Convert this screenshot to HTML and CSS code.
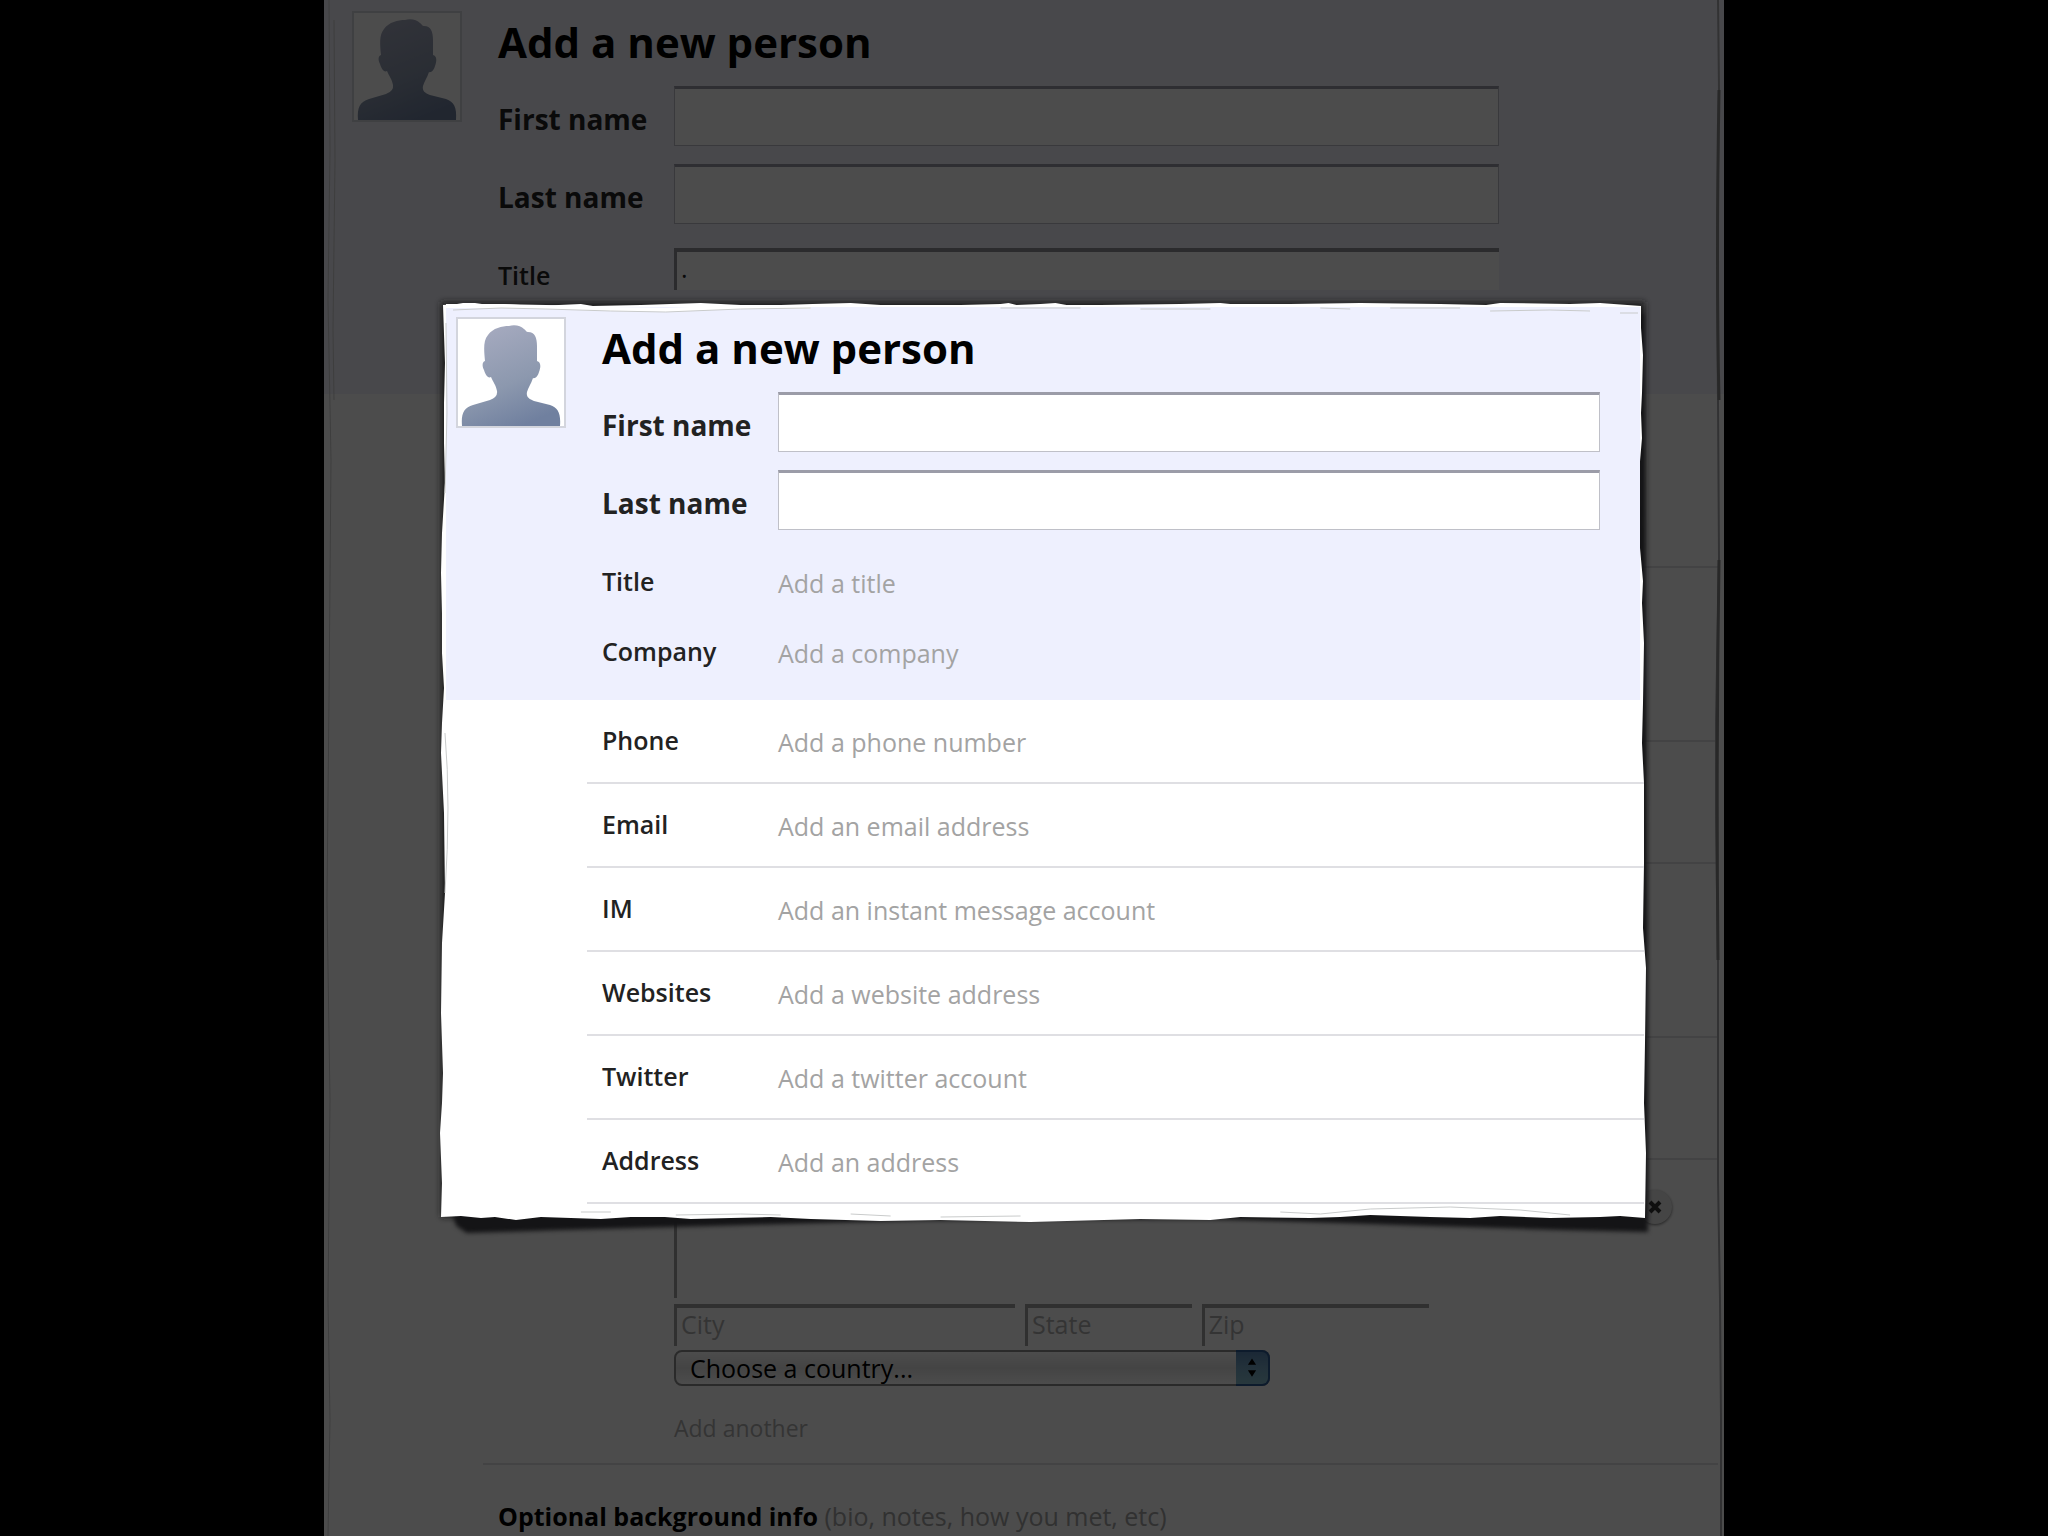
FILE: index.html
```html
<!DOCTYPE html>
<html lang="en">
<head>
    <meta charset="UTF-8">
    <meta name="viewport" content="width=device-width, initial-scale=1.0">
    <title>Add a new person</title>
    <link rel="stylesheet" href="styles.css">
</head>
<body>
    <!-- silhouette shared by both avatars -->
    <svg class="defs" width="0" height="0" aria-hidden="true">
        <defs>
            <linearGradient id="skin" x1="0.2" y1="0" x2="0.6" y2="1">
                <stop offset="0" stop-color="#a7abc0"/>
                <stop offset="0.6" stop-color="#8c98ae"/>
                <stop offset="1" stop-color="#70809f"/>
            </linearGradient>
            <symbol id="person" viewBox="0 0 108 109">
                <path fill="url(#skin)" d="M5 108 C4 95 7 90 16 87 L33 82 Q41 79 40 73 C39 67 36 64 34 59 C31 61 28 56 27 52 C25 48 25 44 28 43 C27 32 26 23 31 17 C36 10 45 8 52 8 C58 6 64 8 67 11 C69 12 69 14 71 14 C78 14 80 20 80 28 L80 43 C84 44 84 49 82 54 C81 58 78 61 76 60 C74 66 71 70 70 74 C69 79 72 81 77 83 L93 87 C101 90 104 95 103 108 Z"/>
            </symbol>
        </defs>
    </svg>

    <div class="page">
        <form class="form">
            <div class="form-header">
                <svg class="avatar" aria-hidden="true"><use href="#person"/></svg>
                <div class="fields">
                    <h1>Add a new person</h1>
                    <div class="name-row">
                        <label for="first-name">First name</label>
                        <input type="text" id="first-name">
                    </div>
                    <div class="name-row">
                        <label for="last-name">Last name</label>
                        <input type="text" id="last-name">
                    </div>
                    <div class="row">
                        <label for="title">Title</label>
                        <input type="text" id="title" class="inset" value=".">
                    </div>
                </div>
            </div>
            <div class="section tall"></div>
            <div class="section tall"></div>
            <div class="section short"></div>
            <div class="section tall"></div>
            <div class="section short"></div>
            <div class="section address">
                <div class="address-fields">
                    <textarea class="inset street" aria-label="Street address"></textarea>
                    <div class="city-row">
                        <input type="text" class="inset" placeholder="City" aria-label="City">
                        <input type="text" class="inset" placeholder="State" aria-label="State">
                        <input type="text" class="inset" placeholder="Zip" aria-label="Zip">
                    </div>
                    <div class="country">
                        <select aria-label="Country">
                            <option>Choose a country...</option>
                        </select>
                        <svg class="stepper" viewBox="0 0 34 35" aria-hidden="true">
                            <path d="M12.500 14 L17 7 L21.500 14 Z M12.500 20 L17 27 L21.500 20 Z"/>
                        </svg>
                    </div>
                    <a href="#" class="another">Add another</a>
                </div>
                <button type="button" class="remove" aria-label="Remove address">
                    <svg viewBox="0 0 34 34" aria-hidden="true"><path d="M12 12 L22 22 M22 12 L12 22"/></svg>
                </button>
            </div>
            <p class="background-info"><strong>Optional background info</strong> (bio, notes, how you met, etc)</p>
        </form>

        <svg class="edge edge-left" viewBox="0 0 20 1536" preserveAspectRatio="none" aria-hidden="true">
            <path d="M5 0 L6 150 L4 300 L7 460 L5 700 L3 900 L6 1100 L4 1300 L6 1420 L4 1536"/>
            <path d="M10 20 L11 160 L9 330 L10 400"/>
        </svg>
        <svg class="edge edge-right" viewBox="0 0 20 1536" preserveAspectRatio="none" aria-hidden="true">
            <path d="M14 0 L15 90 L13 250 L14 400 L15 560 L12 720 L12 820 L14 960 L14 1180 L16 1300 L17 1420 L17 1536"/>
            <path class="thick" d="M15 90 Q12 270 15 400"/>
            <path class="thick" d="M15 560 Q12 760 14 960"/>
        </svg>
        <div class="shade"></div>

        <form class="popup">
            <!-- torn paper sheet behind the form -->
            <svg class="paper" viewBox="0 0 1206 917" preserveAspectRatio="none" aria-hidden="true">
                <defs>
                    <filter id="soft" x="-5%" y="-5%" width="110%" height="110%">
                        <feGaussianBlur stdDeviation="3"/>
                    </filter>
                    <filter id="crisp" x="-5%" y="-5%" width="110%" height="110%" color-interpolation-filters="sRGB">
                        <feGaussianBlur stdDeviation="2"/>
                    </filter>
                </defs>
                <path class="glow" d="M0 -1 H1205 V914 H0 Z" filter="url(#soft)"/>
                <path class="shadow" d="M1180 10 L1203 12 L1204 300 L1206 600 L1207 928 L1120 926 L960 921 L760 914 L480 916 L270 922 L120 926 L26 929 L16 922 L12 910 L600 880 L1180 900 Z" filter="url(#crisp)"/>
                <path class="sheet" d="M2 2 L16 1 L22 0 L34 0 L48 2 L62 1 L96 3 L118 2 L140 1 L152 3 L200 2 L230 1 L260 0 L300 2 L340 2 L372 1 L410 0 L440 2 L520 2 L560 1 L568 0 L576 2 L600 1 L615 0 L626 2 L660 2 L740 1 L780 0 L790 1 L850 1 L920 0 L1000 1 L1046 2 L1060 0 L1130 1 L1160 0 L1201 3 L1201 25 L1203 52 L1202 90 L1201 110 L1202 135 L1199 170 L1199 210 L1200 245 L1203 278 L1202 300 L1204 340 L1203 400 L1202 440 L1204 480 L1204 560 L1203 625 L1206 665 L1205 740 L1204 800 L1206 850 L1205 915 L1180 913 L1160 914 L1110 915 L1060 913 L1030 915 L990 914 L930 912 L900 914 L870 915 L800 914 L770 917 L700 916 L590 919 L500 917 L440 918 L370 916 L330 914 L290 915 L250 916 L224 914 L190 914 L160 916 L130 915 L100 914 L75 917 L54 914 L40 915 L20 913 L0 914 L1 880 L-1 830 L1 800 L2 770 L0 710 L1 640 L4 590 L3 510 L0 450 L1 420 L3 385 L1 350 L1 310 L0 270 L1 230 L4 180 L3 140 L3 100 L4 60 Z"/>
                <path class="crease" d="M140 909 L170 909 M235 912 L300 911 L340 912 M410 911 L450 913 M500 914 L580 913 M840 909 L880 911 L930 906 L1010 904 L1080 907 L1130 912"/>
                <path class="crease" d="M4 430 Q10 500 4 590"/>
            </svg>
            <div class="form-header">
                <svg class="avatar" aria-hidden="true"><use href="#person"/></svg>
                <div class="fields">
                    <h1>Add a new person</h1>
                    <div class="name-row">
                        <label for="popup-first-name">First name</label>
                        <input type="text" id="popup-first-name">
                    </div>
                    <div class="name-row">
                        <label for="popup-last-name">Last name</label>
                        <input type="text" id="popup-last-name">
                    </div>
                    <div class="row"><span class="name">Title</span><a href="#">Add a title</a></div>
                    <div class="row"><span class="name">Company</span><a href="#">Add a company</a></div>
                </div>
            </div>
            <div class="row section"><span class="name">Phone</span><a href="#">Add a phone number</a></div>
            <div class="row section"><span class="name">Email</span><a href="#">Add an email address</a></div>
            <div class="row section"><span class="name">IM</span><a href="#">Add an instant message account</a></div>
            <div class="row section"><span class="name">Websites</span><a href="#">Add a website address</a></div>
            <div class="row section"><span class="name">Twitter</span><a href="#">Add a twitter account</a></div>
            <div class="row section"><span class="name">Address</span><a href="#">Add an address</a></div>
            <!-- creases that run over the header colour -->
            <svg class="creases" viewBox="0 0 1206 917" preserveAspectRatio="none" aria-hidden="true">
                <path class="fold" d="M5 3 L60 3 L105 4 L170 6 L225 7 L300 4 L370 4"/>
                <path class="crease" d="M12 7 L60 5 L105 6 L170 8 L225 9 L300 6 L370 5 M560 5 L640 5 M700 6 L770 6 M880 5 L910 6 M950 5 L1020 5 M1050 8 L1110 7 L1150 8 M1180 10 L1198 10"/>
                <path class="crease" d="M5 20 L6 110 L4 190"/>
            </svg>
        </form>
    </div>
</body>
</html>
```

FILE: styles.css
```css
* {
    box-sizing: border-box;
}
body {
    margin: 0;
    background: #000;
    color: #222;
    font-family: "Open Sans", "Noto Sans", sans-serif;
    font-size: 25px;
}
.defs {
    position: absolute;
}
.page {
    position: relative;
    max-width: 1400px;
    min-height: 100vh;
    margin: 0 auto;
    background: #fff;
    overflow: hidden;
}
h1 {
    margin: 0 0 14px;
    font-size: 42px;
    line-height: 60px;
    color: #000;
}
a {
    color: #a3a3a3;
    text-decoration: none;
}
input, textarea, select {
    font: inherit;
    color: #222;
    background: #fff;
    border-radius: 0;
    outline: none;
}

/* header block */
.form-header {
    display: flex;
    align-items: flex-start;
    gap: 37px;
    padding: 12px 225px 82px 29px;
    background: #f0f0fa;
}
.avatar {
    flex: none;
    width: 108px;
    height: 109px;
    background: #fff;
    outline: 2px solid #d3d5dd;
    outline-offset: -1px;
}
.fields {
    flex: 1;
}
.name-row, .row {
    display: grid;
    grid-template-columns: 176px 1fr;
    align-items: center;
}
.name-row {
    margin-bottom: 18px;
    font-size: 28px;
}
.name-row label {
    padding-top: 6px;
    font-weight: 700;
}
.name-row input {
    width: 100%;
    height: 60px;
    padding: 0 10px;
    border: 1px solid #bfc0c8;
    border-top: 3px solid #9b9ca8;
}
.row {
    min-height: 70px;
}
.row label, .name {
    padding-bottom: 4px;
    font-weight: 600;
}
.inset {
    width: 100%;
    height: 42px;
    padding: 0 4px 6px;
    border: 0 solid #a0a0a0;
    border-top-width: 4px;
    border-left-width: 3px;
}
.inset::placeholder {
    color: #b0b0b0;
    opacity: 1;
}
.row .inset {
    align-self: start;
    margin-top: 6px;
    border-color: #8f8f96;
}

/* sections under the header */
.section {
    margin: 0 6px 0 159px;
    padding-left: 15px;
    border-bottom: 2px solid #dfdfe3;
}
.tall {
    height: 174px;
}
.short {
    height: 122px;
}
.address {
    display: flex;
    justify-content: space-between;
    align-items: flex-start;
    padding: 20px 46px 19px 191px;
}
.address-fields {
    flex: 0 1 755px;
}
.street {
    display: block;
    height: 118px;
    resize: none;
}
.city-row {
    display: grid;
    grid-template-columns: 45fr 22fr 30fr;
    gap: 10px;
    margin: 6px 0 4px;
}
.country {
    position: relative;
    width: 79%;
}
.country select {
    display: block;
    width: 100%;
    height: 36px;
    padding: 0 40px 0 14px;
    appearance: none;
    line-height: 32px;
    color: #000;
    background: linear-gradient(#fff, #e4e4e4 50%, #fff);
    border: 2px solid #8c8c8c;
    border-radius: 8px;
}
.stepper {
    position: absolute;
    top: 0;
    right: 0;
    width: 34px;
    height: 36px;
    background: linear-gradient(#5a86b4, #76a6c4 50%, #86bccb);
    border: 2px solid #2d5a94;
    border-left: 0;
    border-radius: 0 8px 8px 0;
    pointer-events: none;
}
.another {
    display: block;
    margin-top: 26px;
    font-size: 23px;
    line-height: 32px;
    color: #b0b0b0;
}
.remove {
    width: 34px;
    height: 34px;
    margin-top: 10px;
    padding: 0;
    border: 0;
    border-radius: 50%;
    background: #e8e8e8;
    box-shadow: 0 1px 3px #777;
}
.remove svg {
    display: block;
}
.remove path {
    stroke: #333;
    stroke-width: 4;
}
.background-info {
    margin: 0 20px 0 174px;
    padding: 34px 0 2px;
    line-height: 34px;
    color: #a3a3a3;
}
.background-info strong {
    color: #000;
}

/* worn page edges and dimming */
.edge {
    position: absolute;
    top: 0;
    width: 20px;
    height: 100%;
}
.edge-left {
    left: 0;
}
.edge-right {
    right: 0;
}
.edge path {
    fill: none;
    stroke: #cfcfcf;
    stroke-width: 1;
}
.edge-right path {
    stroke: #a8a8ac;
    stroke-width: 2;
}
.edge-right .thick {
    stroke: #888;
    stroke-width: 3;
}
.shade {
    position: absolute;
    inset: 0;
    background: rgba(0, 0, 0, 0.7);
}

/* popup sheet */
.popup {
    position: absolute;
    top: 303px;
    left: 117px;
    right: 78px;
    padding-bottom: 16px;
    isolation: isolate;
}
.paper, .creases {
    position: absolute;
    top: 0;
    left: 0;
    width: 100%;
    height: 100%;
    overflow: visible;
    pointer-events: none;
}
.paper {
    z-index: -1;
}
.sheet {
    fill: #fff;
}
.glow {
    fill: #1c1c1e;
}
.shadow {
    fill: #141416;
    stroke: #141416;
    stroke-width: 2;
}
.crease, .fold {
    fill: none;
    stroke: #c9cbcb;
    stroke-width: 1;
}
.fold {
    stroke: #fff;
    stroke-width: 4;
}
.popup .form-header {
    margin: 0 6px 0 5px;
    padding: 15px 40px 12px 11px;
    background: linear-gradient(#eef0fe, #eef0fe) no-repeat 0 4px;
}
.popup .section {
    min-height: 84px;
    margin: 0 2px 0 146px;
    padding-top: 2px;
}
```
